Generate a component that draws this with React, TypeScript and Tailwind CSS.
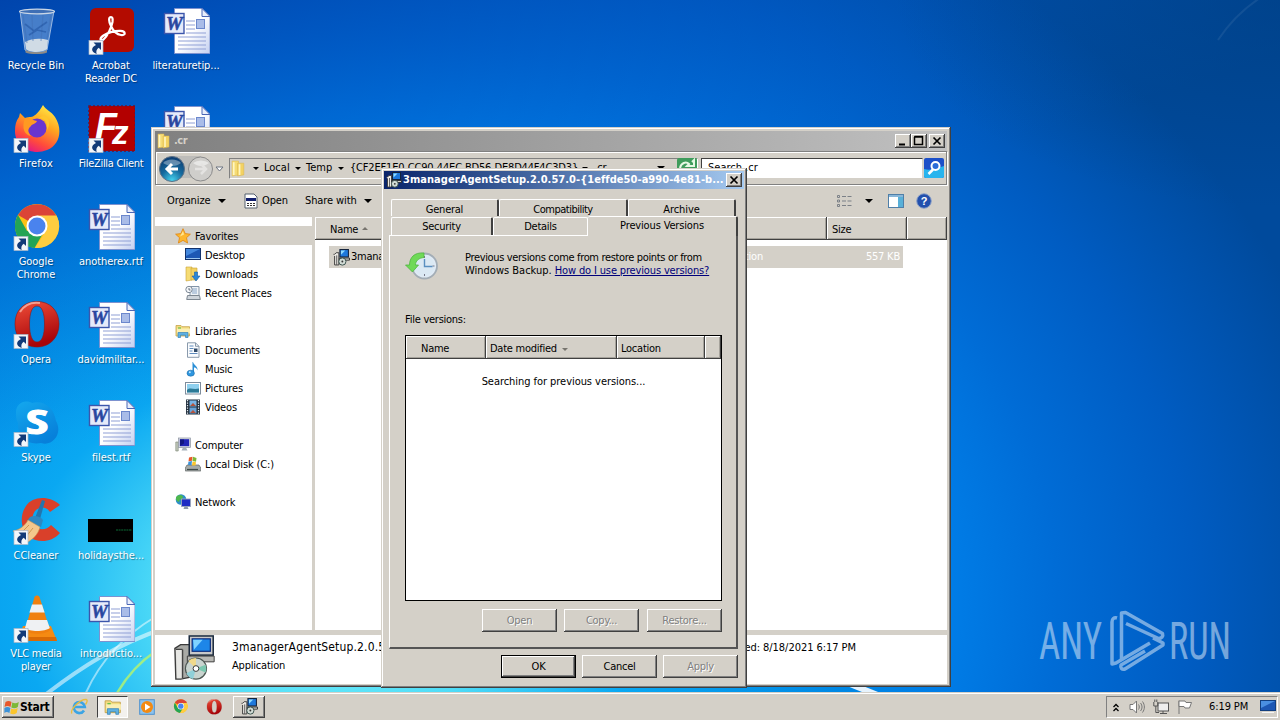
import React from "react";
import clsx from "clsx";

const RAISED =
  "bg-[#d4d0c8] shadow-[inset_-1px_-1px_0_#404040,inset_1px_1px_0_#fff,inset_-2px_-2px_0_#808080]";
const FRAME =
  "bg-[#d4d0c8] shadow-[inset_-1px_-1px_0_#404040,inset_1px_1px_0_#d4d0c8,inset_-2px_-2px_0_#808080,inset_2px_2px_0_#fff]";
const HEADER_CELL =
  "flex items-center bg-[#d4d0c8] pt-[3px] shadow-[inset_-1px_-1px_0_#404040,inset_1px_1px_0_#fff,inset_-2px_-2px_0_#a5a29b]";

/* ---------- desktop icons, all on a 48x48 grid ---------- */

const Shortcut = () => (
  <g>
    <rect x="2" y="33.5" width="14" height="14" fill="#f3f6fa" stroke="#a9b7c8" strokeWidth=".7" />
    <path d="M6.500 35.500H14V43l-2.300-2.300c-2.200 1.800-2.900 3.500-2 6.300C3.500 44.500 4 40.500 9 38z" fill="#123a78" />
  </g>
);

const RecycleBin = () => (
  <svg viewBox="0 0 48 48" className="size-12">
    <path d="M8 4l5 39c4 4 18 4 22 0l7-39z" fill="#7fa9dc" fillOpacity=".55" stroke="#b7cdea" strokeWidth=".8" />
    <path d="M13 35c7-4 16-4 23-2l-1 9c-4 4-18 4-21 0z" fill="#e9ebea" fillOpacity=".85" />
    <path d="M13.500 43c4 3 18 3 21.500 0v2.500c-4 2-17 2-21.500 0z" fill="#8c8a86" />
    <path d="M11 8l4 28M20 8l1 26M31 8l-2 26M39 8l-4 24" stroke="#3f6fb5" strokeWidth="1.200" fill="none" opacity=".5" />
    <path d="M13 17l9 7 13-9M17 28l8-5 9 2" stroke="#1c4e9c" strokeWidth="1.600" fill="none" opacity=".5" />
    <ellipse cx="25" cy="4.500" rx="17.500" ry="2.400" fill="#3f6fb5" stroke="#c9d6e6" strokeWidth="1.200" />
  </svg>
);

const Acrobat = () => (
  <svg viewBox="0 0 48 48" className="size-12">
    <rect x="3" y="1" width="44" height="44" rx="6" fill="#b30b00" />
    <path
      d="M24 10c-2.500 0-2.500 4 0 9 2 4.500 6 8.500 10 9 5 .6 5-4-.5-4.200-6-.2-13 2-17 4.700-4.500 3-3.500 6.500 0 4 4-3.500 8-12 9-17.500.5-3.500-.2-5-1.500-5z"
      fill="none"
      stroke="#fff"
      strokeWidth="2.200"
    />
    <Shortcut />
  </svg>
);

const WordDoc = () => (
  <svg viewBox="0 0 48 48" className="size-12">
    <defs>
      <linearGradient id="page" x1="0" y1="0" x2="1" y2="1">
        <stop offset=".5" stopColor="#fff" />
        <stop offset="1" stopColor="#c3cff0" />
      </linearGradient>
    </defs>
    <path d="M12.500 1.500H40l8 8V46.500H12.500z" fill="url(#page)" stroke="#7d92cf" />
    <path d="M40 1.500V9.500h8z" fill="#e8eefb" stroke="#4a66b5" />
    <path d="M24 14h9M24 18h9M24 22h9M24 26h20M16 30h28M16 34h28M16 38h28M16 42h28" stroke="#8f9fd6" strokeWidth="1.200" />
    <rect x="34.500" y="12.500" width="8" height="9" fill="#a9bce8" stroke="#6b87cc" />
    <rect x="2.500" y="6.500" width="19.500" height="20" fill="#e5eafa" stroke="#3c56ab" strokeWidth="1.400" />
    <text x="4" y="23" textLength="16.500" lengthAdjust="spacingAndGlyphs" fontSize="18" fontWeight="700" fontStyle="italic" fontFamily="Liberation Serif, serif" fill="#29469f" stroke="#29469f" strokeWidth=".5">
      W
    </text>
  </svg>
);

const Firefox = () => (
  <svg viewBox="0 0 48 48" className="size-12">
    <defs>
      <linearGradient id="fox" x1=".8" y1="0" x2=".3" y2="1">
        <stop offset="0" stopColor="#fff04a" />
        <stop offset=".4" stopColor="#ffa41f" />
        <stop offset=".75" stopColor="#ff4a3c" />
        <stop offset="1" stopColor="#e31587" />
      </linearGradient>
    </defs>
    <path d="M31 0c3 5 8 6 12 12 8 12 5 28-8 33-14 6-32-2-32-19 0-6 1-10 4-14l1-4 5 5c2-1 4-1 6-1 2 0 7-3 12-12z" fill="url(#fox)" />
    <circle cx="25" cy="23" r="9.500" fill="#6a35cf" />
    <path d="M13 13c5 0 6 2 12 3-1 3-5 3-6 5-4 3-3 7 0 10-6-1-10-7-6-18z" fill="#ff9a22" />
    <path d="M27 13c6 0 9 5 8 12 4-6 2-13-3-15z" fill="#ffc52c" />
    <Shortcut />
  </svg>
);

const FileZilla = () => (
  <svg viewBox="0 0 48 48" className="size-12">
    <rect x="2" y="1" width="46" height="45" fill="#b30000" />
    <rect x="2" y="1" width="46" height="45" fill="none" stroke="#6d1230" strokeWidth="1.500" strokeDasharray="2 2" />
    <text x="8" y="34" fontSize="36" fontWeight="700" fontStyle="italic" fontFamily="Liberation Sans, sans-serif" fill="#fff">
      F
      <tspan x="25" y="39" fontSize="33">
        z
      </tspan>
    </text>
    <Shortcut />
  </svg>
);

const ChromeMark = () => (
  <g>
    <circle cx="25" cy="23" r="22" fill="#fbc116" />
    <path d="M25 23L6 12a22 22 0 0 1 38.500 1z" fill="#db4437" />
    <path d="M6 12a22 22 0 0 0 16.500 33L33 27 15 28z" fill="#23a455" />
    <path d="M25 12.500h19.500A22 22 0 0 1 23 45l11-17z" fill="#ffcd40" />
    <circle cx="25" cy="23" r="10.500" fill="#fff" />
    <circle cx="25" cy="23" r="8.500" fill="#4a83ee" />
  </g>
);

const Chrome = () => (
  <svg viewBox="0 0 48 48" className="size-12">
    <ChromeMark />
    <Shortcut />
  </svg>
);

const OperaMark = () => (
  <g>
    <defs>
      <linearGradient id="opera" x1="0" y1="0" x2=".3" y2="1">
        <stop offset="0" stopColor="#f0503a" />
        <stop offset="1" stopColor="#a80409" />
      </linearGradient>
    </defs>
    <path
      fillRule="evenodd"
      d="M25 0.500c13 0 22 9 22 22.500S38 46 25 46 3 37 3 23 12 .5 25 .5zM25 5c-5 0-7.500 7-7.500 18S20 41 25 41s7.500-7 7.500-18S30 5 25 5z"
      fill="url(#opera)"
      stroke="#8d1414"
      strokeWidth=".6"
    />
    <path d="M8 11c5-8 13-10 20-9" stroke="#f9b6a8" strokeWidth="2" fill="none" opacity=".8" />
  </g>
);

const Opera = () => (
  <svg viewBox="0 0 48 48" className="size-12">
    <OperaMark />
    <Shortcut />
  </svg>
);

const Skype = () => (
  <svg viewBox="0 0 48 48" className="size-12">
    <defs>
      <linearGradient id="skype" x1="0" y1="0" x2=".6" y2="1">
        <stop offset="0" stopColor="#14a8ee" />
        <stop offset="1" stopColor="#0780da" />
      </linearGradient>
    </defs>
    <path d="M4 13C4 5 12 0 20 4c12-3 22 5 24 18 7 12-3 26-15 22C14 47 5 36 6 24c-2-3-2-7-2-11z" fill="url(#skype)" />
    <text x="14" y="35" textLength="22" lengthAdjust="spacingAndGlyphs" fontSize="34" fontWeight="700" fontFamily="Open Sans, sans-serif" fill="#fff" stroke="#fff">
      S
    </text>
    <Shortcut />
  </svg>
);

const CCleaner = () => (
  <svg viewBox="0 0 48 48" className="size-12">
    <path d="M48 8C38-2 20-1 14 9c-7 10-5 24 3 31 9 6 22 6 31-4l-9-8c-4 5-12 6-16 1-4-5-3-12 1-16 5-4 11-3 14 2z" fill="#d9402a" />
    <path d="M30 3l3 1-5 18-5-1z" fill="#2375ad" />
    <path d="M18 20c4-2 10-1 13 3l-2 7-14-6z" fill="#2d88c2" />
    <path d="M16 23l12 7c-2 8-8 13-14 16L1 34c6-1 12-5 15-11z" fill="#f3c78c" stroke="#c8924f" strokeWidth=".6" />
    <path d="M17 28L7 38M21 31l-8 10" stroke="#cf9853" strokeWidth="1" />
    <Shortcut />
  </svg>
);

const Vlc = () => (
  <svg viewBox="0 0 48 48" className="size-12">
    <path d="M11 31h28l6 15H5z" fill="#f58a12" />
    <path d="M5 46h40l-1-4H7z" fill="#d86a05" />
    <path d="M22.500 2c1-2 4-2 5 0l10.500 33c-4 5-21 5-25 0z" fill="#f0800f" />
    <path d="M20 9.500h10l2.600 8H17.400z" fill="#eff1f3" />
    <path d="M15.200 25h19.800l2.800 8c-5 4-20.500 4-24.800 0z" fill="#eff1f3" />
    <Shortcut />
  </svg>
);

const BlackThumb = () => (
  <svg viewBox="0 0 48 48" className="size-12">
    <rect x="1" y="22" width="45" height="23" fill="#000" />
    <path d="M29 33h16" stroke="#0c6a35" strokeDasharray="2 .6" />
  </svg>
);

const desktop = [
  { label: ["Recycle Bin"], icon: RecycleBin },
  { label: ["Firefox"], icon: Firefox, spacing: "tracking-[0.2px]" },
  { label: ["Google", "Chrome"], icon: Chrome },
  { label: ["Opera"], icon: Opera },
  { label: ["Skype"], icon: Skype },
  { label: ["CCleaner"], icon: CCleaner },
  { label: ["VLC media", "player"], icon: Vlc, spacing: "tracking-[-0.2px]" },
  { label: ["Acrobat", "Reader DC"], icon: Acrobat },
  { label: ["FileZilla Client"], icon: FileZilla, spacing: "tracking-[-0.3px]" },
  { label: ["anotherex.rtf"], icon: WordDoc },
  { label: ["davidmilitar..."], icon: WordDoc },
  { label: ["filest.rtf"], icon: WordDoc },
  { label: ["holidaysthe..."], icon: BlackThumb },
  { label: ["introductio..."], icon: WordDoc },
  { label: ["literaturetip..."], icon: WordDoc },
  { label: [], icon: WordDoc },
];

/* ---------- small 16px icons ---------- */

const Folder = ({ className = "size-4" }: { className?: string }) => (
  <svg viewBox="0 0 16 16" className={className}>
    <path d="M2 1h6v13l-6 1z" fill="#f6dc74" stroke="#d9b650" strokeWidth=".5" />
    <path d="M7 3h6v11l-6 1z" fill="#f3d262" stroke="#d9b650" strokeWidth=".5" />
    <path d="M3.500 2v12M9 4v10" stroke="#fff6c2" strokeWidth="1.600" />
  </svg>
);

const Setup = ({ className = "size-4" }: { className?: string }) => (
  <svg viewBox="0 0 48 48" className={className}>
    <path d="M3 14l6-4h10v34l-10 2H4z" fill="#a9aaa6" stroke="#3b3b3b" strokeWidth="1.400" />
    <path d="M4 15h7v30H5z" fill="#e7e7e4" />
    <path d="M4 15h7M11 15v30" stroke="#444" strokeWidth="1.500" />
    <rect x="18" y="1" width="25" height="20" fill="#c9c9c9" stroke="#1b2a3d" strokeWidth="1.600" />
    <rect x="21" y="4" width="19" height="13" fill="#1d86e8" stroke="#0b2a7a" strokeWidth="1.200" />
    <path d="M22 5h10l-9 10z" fill="#7fd3ff" />
    <path d="M16 22h28v6H16z" fill="#b8b8b4" stroke="#3b3b3b" />
    <circle cx="25" cy="35" r="11" fill="#c9d4cf" stroke="#4c5652" strokeWidth="1.200" />
    <path d="M25 35L17 27a11 11 0 0 1 8-3z" fill="#f0d98a" />
    <path d="M25 35l10-4a11 11 0 0 1 0 8z" fill="#7cc8b0" />
    <path d="M25 35l-3 11a11 11 0 0 1-7-6z" fill="#90d0d8" />
    <circle cx="25" cy="35" r="3" fill="#fff" stroke="#333" />
  </svg>
);

// simplified version of Setup that stays readable at list size
const SetupSmall = ({ className = "size-4" }: { className?: string }) => (
  <svg viewBox="0 0 16 16" className={className}>
    <path d="M.5 5h1l1.500-1.500h2.500V15H1.500V6.500" fill="#ece9e4" stroke="#3c3c3c" strokeWidth=".9" />
    <path d="M3.500 6v9" stroke="#555" strokeWidth=".9" />
    <rect x="6.500" y=".5" width="8" height="7" fill="#1d78dc" stroke="#14233c" />
    <path d="M7.500 1.500h4l-4 4z" fill="#8fdcff" />
    <path d="M6 8.500h9.500v2H6z" fill="#d5d3ce" stroke="#222" strokeWidth=".8" />
    <circle cx="8.800" cy="11.800" r="3.400" fill="#d2dcd6" stroke="#39504c" strokeWidth=".9" />
    <circle cx="8.800" cy="11.800" r=".9" fill="#333" />
  </svg>
);

const Star = () => (
  <svg viewBox="0 0 16 16" className="size-4">
    <path d="M8 .7l2.200 4.900 5.200.6-3.900 3.500 1.100 5.300L8 12.400 3.400 15l1.100-5.300L.6 6.200l5.200-.6z" fill="#fdb72e" stroke="#df8410" strokeWidth=".8" />
    <path d="M8 3l1 3.500-4 2z" fill="#ffe590" />
  </svg>
);

const DesktopIcon = () => (
  <svg viewBox="0 0 16 16" className="size-4">
    <rect x=".5" y="1.500" width="15" height="11" fill="#1d57b4" stroke="#12326c" />
    <path d="M1 2h14L1 9z" fill="#4387dd" />
    <path d="M1 11.500h14" stroke="#9cc6f0" />
  </svg>
);

const Downloads = () => (
  <svg viewBox="0 0 16 16" className="size-4">
    <path d="M1 1h6v13l-6 1z" fill="#f6dc74" stroke="#c9a136" strokeWidth=".6" />
    <path d="M6 2h6v12H6z" fill="#f3d262" stroke="#caa238" strokeWidth=".6" />
    <path d="M9.500 6h3v4h2.500l-4 5-4-5h2.500z" fill="#2a86d8" stroke="#1560a8" strokeWidth=".6" />
  </svg>
);

const Recent = () => (
  <svg viewBox="0 0 16 16" className="size-4">
    <path d="M5 1.500h9v9H5z" fill="#eef2f6" stroke="#8294a8" />
    <path d="M7 4h5M7 6h5M7 8h5" stroke="#88a5c7" />
    <circle cx="4" cy="4.500" r="3.200" fill="#f5f7fa" stroke="#7e8a97" />
    <path d="M4 3v2h1.500" stroke="#456" fill="none" strokeWidth=".8" />
    <path d="M2.500 10.500h12l.8 4H1.700z" fill="#cfd5db" stroke="#7d8791" />
  </svg>
);

const Library = ({ className = "size-4" }: { className?: string }) => (
  <svg viewBox="0 0 16 16" className={className}>
    <path d="M1 2.500h5l1 1.200h7.500V13H1z" fill="#f4dc80" stroke="#c5a24a" strokeWidth=".8" />
    <path d="M2 5.500h13v5H2z" fill="#fbefb4" />
    <path d="M3 14.500V9.500h10v5h-2.500v-2.300h-5v2.300z" fill="#5fb1e2" stroke="#3784b8" strokeWidth=".7" />
    <path d="M3 5h3" stroke="#6cc04a" strokeWidth="1.200" />
  </svg>
);

const Documents = () => (
  <svg viewBox="0 0 16 16" className="size-4">
    <path d="M2.500.8h8l3.500 3.500v11H2.500z" fill="#fafcfe" stroke="#7d8ea3" strokeWidth=".9" />
    <path d="M10.500.8v3.500H14" fill="none" stroke="#7d8ea3" strokeWidth=".9" />
    <path d="M4.500 4h4M4.500 6.500h4M4.500 9h3M4.500 11.500h8" stroke="#4e7fb5" strokeWidth=".9" />
    <rect x="9" y="6.500" width="3.500" height="3.500" fill="#304a68" />
  </svg>
);

const Music = () => (
  <svg viewBox="0 0 16 16" className="size-4">
    <path d="M8 1c1 3.500 5 4 4.500 8.500C12 7 10 6.500 9 6.500v6H7.500V1z" fill="#2b8fd6" />
    <ellipse cx="5.700" cy="12.200" rx="3.700" ry="3" fill="#2f97e0" stroke="#1c6ca8" strokeWidth=".6" />
    <circle cx="4.800" cy="11.300" r="1" fill="#bfe6ff" />
  </svg>
);

const Pictures = () => (
  <svg viewBox="0 0 16 16" className="size-4">
    <rect x=".5" y="2.500" width="15" height="11.500" fill="#fff" stroke="#7d8c9c" />
    <rect x="2" y="4" width="12" height="8.500" fill="#8fd0ee" />
    <path d="M2 10c3-3 6 0 12-1.500v4H2z" fill="#2d7a96" />
  </svg>
);

const Videos = () => (
  <svg viewBox="0 0 16 16" className="size-4">
    <rect x="1" y=".5" width="14" height="15" fill="#23303e" />
    <path d="M2.500 1v14M13.500 1v14" stroke="#e7edf3" strokeWidth="1.200" strokeDasharray="1.300 1.200" />
    <rect x="4.500" y="1.500" width="7" height="6" fill="#79b4e4" />
    <rect x="4.500" y="8.500" width="7" height="6" fill="#6ba3d6" />
    <path d="M5 7l3-3 3 3zM5 14l3-3 3 3z" fill="#b4533c" />
  </svg>
);

const Computer = () => (
  <svg viewBox="0 0 16 16" className="size-4">
    <path d="M.8 5h2.400v9H.8z" fill="#c3cbbd" stroke="#76806e" strokeWidth=".6" />
    <rect x="3.500" y="1" width="12" height="9.500" fill="#dcdfe4" stroke="#8a93a0" strokeWidth=".7" />
    <rect x="4.800" y="2.200" width="9.400" height="7" fill="#2023b4" />
    <path d="M5 2.500h4v4L5 9z" fill="#111680" />
    <path d="M8 10.500h3l1.500 3h-6z" fill="#a6afba" />
  </svg>
);

const Disk = () => (
  <svg viewBox="0 0 16 16" className="size-4">
    <path d="M2 9h12l1.800 3v3H.3v-3z" fill="#a4aaa8" stroke="#5e6664" strokeWidth=".7" />
    <path d="M2 13.500h11" stroke="#3f4a48" strokeWidth="1.200" />
    <path d="M4 1.500l3.500-.8-.5 4-3.500.6z" fill="#e8572b" />
    <path d="M8 .8L11.500 2 11 5.800 7.500 5z" fill="#7db838" />
    <path d="M3.400 5.800L7 5l-.5 4H3z" fill="#3c92d8" />
    <path d="M7.500 5.500l3.500.8-.5 3.200H7z" fill="#fbc52c" />
  </svg>
);

const Network = () => (
  <svg viewBox="0 0 16 16" className="size-4">
    <circle cx="6" cy="5.500" r="5.300" fill="#2c8fc9" />
    <path d="M2 2c3-2 6-1 6 1S4 5 4 8C1 7 0 4 2 2z" fill="#4fb84c" />
    <rect x="6.500" y="5" width="9" height="7.500" fill="#1e2bc4" stroke="#9aa6bd" strokeWidth=".9" />
    <path d="M9.500 12.500h3l1 2.500h-5z" fill="#8c98ab" />
  </svg>
);

const Arrow = () => (
  <svg viewBox="0 0 8 4" className="h-1 w-2 shrink-0">
    <path d="M0 0h8L4 4z" />
  </svg>
);

const MiniArrow = () => (
  <svg viewBox="0 0 6 3" className="h-[3px] w-1.5 shrink-0">
    <path d="M0 0h6L3 3z" />
  </svg>
);

/* ---------- explorer window ---------- */

const CaptionButton = ({ children }: { children: React.ReactNode }) => (
  <button className={clsx("flex h-[14px] w-4 items-center justify-center", RAISED)}>
    <svg viewBox="0 0 16 14" className="h-[14px] w-4" fill="none" stroke="#000">
      {children}
    </svg>
  </button>
);

const navItems = [
  { label: "Favorites", icon: Star, root: true },
  { label: "Desktop", icon: DesktopIcon },
  { label: "Downloads", icon: Downloads },
  { label: "Recent Places", icon: Recent },
  null,
  { label: "Libraries", icon: Library, root: true },
  { label: "Documents", icon: Documents },
  { label: "Music", icon: Music },
  { label: "Pictures", icon: Pictures },
  { label: "Videos", icon: Videos },
  null,
  { label: "Computer", icon: Computer, root: true },
  { label: "Local Disk (C:)", icon: Disk },
  null,
  { label: "Network", icon: Network, root: true },
];

const AddressBar = () => (
  <div className="flex h-[34px] shrink-0 items-center border border-[#808080] tracking-normal shadow-[inset_1px_1px_0_#fff,1px_1px_0_#fff]">
    <svg viewBox="0 0 68 30" className="ml-[3px] h-[30px] w-[68px] shrink-0">
      <defs>
        <radialGradient id="back" cx=".5" cy=".95" r=".9">
          <stop offset="0" stopColor="#45d2ee" />
          <stop offset=".5" stopColor="#156a9e" />
          <stop offset="1" stopColor="#0d3f74" />
        </radialGradient>
      </defs>
      <path d="M14 3h28v22H14z" fill="#bdbcb9" />
      <circle cx="13" cy="16" r="12.500" fill="url(#back)" stroke="#5d7186" />
      <path d="M4 10a11 8 0 0 1 18 0c-5 4-12 4-18 0z" fill="#fff" opacity=".35" />
      <path d="M19 16H8m5-5l-5 5 5 5" stroke="#fff" strokeWidth="3" fill="none" />
      <circle cx="41.500" cy="16" r="12" fill="#cfcecb" stroke="#8b8b8b" />
      <path d="M34 10a11 8 0 0 1 16 0c-5 4-11 4-16 0z" fill="#fff" opacity=".5" />
      <path d="M36 16h11m-5-5l5 5-5 5" stroke="#e4e3e1" strokeWidth="2.500" fill="none" />
      <path d="M57 14h7l-3.500 4z" fill="#fff" stroke="#6d7480" />
    </svg>
    <div className="ml-[2px] flex h-[21px] w-[469px] shrink-0 items-center border border-[#808080] border-r-white border-b-white">
      <Folder className="size-[17px]" />
      <div className="ml-[6px] flex items-center gap-1.5">
        <MiniArrow />
        <span className="-ml-px w-6">Local</span>
        <span className="ml-px flex">
          <MiniArrow />
        </span>
        <span className="-ml-px w-[26px]">Temp</span>
        <MiniArrow />
        <span className="w-[226px] tracking-[-0.18px] whitespace-nowrap">{"{CF2EF1E0-CC90-44EC-BD56-DE8D44F4C3D3}"}</span>
        <MiniArrow />
        <span>.cr</span>
      </div>
      <span className="mr-3 ml-auto">
        <Arrow />
      </span>
      <svg viewBox="0 0 20 20" className="size-5 shrink-0">
        <rect width="20" height="20" rx="2" fill="#3f9c5c" />
        <path d="M3 10c1-5 6-7 9-4l-2 2h7V2l-2 2" fill="none" stroke="#e6f8e4" strokeWidth="2" />
      </svg>
    </div>
    <div className="ml-[3px] flex h-[21px] w-[222px] shrink-0 items-center border border-[#404040] border-r-[#d4d0c8] border-b-[#d4d0c8] bg-white pl-1.5">
      Search .cr
    </div>
    <svg viewBox="0 0 20 20" className="ml-px size-5 shrink-0">
      <rect width="20" height="20" rx="2" fill="#1c4fc8" />
      <path d="M0 11c7 2 13-1 20-3v10a2 2 0 0 1-2 2H2a2 2 0 0 1-2-2z" fill="#27b4ee" />
      <path d="M9 11.500L4.500 16" stroke="#fff" strokeWidth="2.500" />
      <circle cx="11.500" cy="8" r="4" fill="#2b6cd8" stroke="#fff" strokeWidth="2" />
    </svg>
  </div>
);

const Toolbar = () => (
  <div className="flex h-8 shrink-0 items-center pl-3 tracking-[-0.1px]">
    <span className="w-[44px]">Organize</span>
    <span className="ml-[7px]">
      <Arrow />
    </span>
    <svg viewBox="0 0 14 16" className="ml-[18px] h-4 w-[14px]">
      <path d="M1 1h9l3 3v11H1z" fill="#fff" stroke="#55606e" />
      <rect x="2" y="5" width="10" height="3" fill="#101e6e" />
      <path d="M3 10.500h2M6 10.500h2M9 10.500h2M3 12.500h2M6 12.500h2M9 12.500h2" stroke="#333" />
    </svg>
    <span className="ml-1 w-[28px]">Open</span>
    <span className="ml-[15px] w-[54px] whitespace-nowrap">Share with</span>
    <span className="ml-[5px]">
      <Arrow />
    </span>
    <svg viewBox="0 0 16 14" className="mr-[13px] ml-auto h-[14px] w-4" fill="none" stroke="#7b8087">
      <path d="M1.500 1.500h2v2h-2zM1.500 6h2v2h-2zM1.500 10.500h2v2h-2z" />
      <path d="M6 2.500h4M11.500 2.500h4M6 7h4M11.500 7h4M6 11.500h4M11.500 11.500h4" />
    </svg>
    <Arrow />
    <svg viewBox="0 0 16 14" className="ml-[15px] h-[14px] w-4">
      <rect x=".5" y=".5" width="15" height="13" fill="#fff" stroke="#4f7fa8" />
      <path d="M1 2h14" stroke="#89b6d8" strokeWidth="2" />
      <rect x="10" y="3" width="5" height="10" fill="#58b0d8" />
    </svg>
    <svg viewBox="0 0 16 16" className="mr-[15px] ml-3 size-4">
      <circle cx="8" cy="8" r="7.300" fill="#2350ad" stroke="#8fa3c8" />
      <text x="8" y="12" textAnchor="middle" fontSize="11" fontWeight="700" fontFamily="Liberation Sans, sans-serif" fill="#fff">
        ?
      </text>
    </svg>
  </div>
);

const Explorer = () => (
  <div className={clsx("absolute top-[127px] left-[151px] flex h-[560px] w-[800px] flex-col p-1 pb-[3px]", FRAME)}>
    <div className="flex h-5 shrink-0 items-center bg-linear-to-r from-[#808080] to-[#c0c0c0] pr-[2px] pl-px text-[#d4d0c8]">
      <Folder />
      <span className="ml-[2px] font-bold tracking-[-0.5px]">.cr</span>
      <div className="ml-auto flex">
        <CaptionButton>
          <path d="M4 10.500h6" strokeWidth="2" />
        </CaptionButton>
        <CaptionButton>
          <path d="M3.500 3v7.500h8V2.500h-8M3 3h9" strokeWidth="1.500" />
        </CaptionButton>
        <span className="w-[2px]" />
        <CaptionButton>
          <path d="M4.500 3.500l7 7M11.500 3.500l-7 7" strokeWidth="1.700" />
        </CaptionButton>
      </div>
    </div>
    <AddressBar />
    <Toolbar />
    <div className="flex min-h-0 flex-1 bg-[#d4d0c8]">
      <div className="w-[157px] bg-white pt-[9px] tracking-[-0.15px]">
        {navItems.map((item, i) =>
          item ? (
            <div
              key={item.label}
              className={clsx(
                "flex h-[19px] items-center gap-1",
                item.root ? "pl-5" : "pl-[30px]",
                i === 0 && "bg-[#d4d0c8]"
              )}
            >
              <item.icon />
              <span className="pt-[3px]">{item.label}</span>
            </div>
          ) : (
            <div key={i} className="h-[19px]" />
          )
        )}
      </div>
      <div className="ml-[3px] flex-1 bg-white">
        <div className="flex h-[23px]">
          <div className={clsx("w-[300px] gap-1 pl-[15px]", HEADER_CELL)}>
            Name
            <svg viewBox="0 0 6 3" className="mb-1 h-[3px] w-1.5">
              <path d="M0 3h6L3 0z" fill="#77746e" />
            </svg>
          </div>
          <div className={clsx("w-[212px]", HEADER_CELL)} />
          <div className={clsx("w-20 pl-[5px]", HEADER_CELL)}>Size</div>
          <div className={clsx("flex-1", HEADER_CELL)} />
        </div>
        <div className="mt-[6px] ml-[14px] flex h-[22px] w-[574px] items-center bg-[#d4d0c8] pr-[3px] pl-1">
          <SetupSmall className="size-[17px]" />
          <span className="ml-px w-[330px] pt-px">3managerAgentSetup.2.0.57.0</span>
          <span className="flex-1 pt-px pl-[28px] tracking-[-0.1px] text-white">Application</span>
          <span className="pt-px tracking-[-0.2px] text-white">557 KB</span>
        </div>
      </div>
    </div>
    <div className="mt-[5px] flex h-[49px] shrink-0 bg-white">
      <Setup className="ml-[17px] size-[46px]" />
      <div className="ml-[14px] flex w-[430px] flex-col pt-[3px] leading-[18px]">
        <span className="text-[12px] tracking-[0.15px]">3managerAgentSetup.2.0.57.0</span>
        <span className="pt-px tracking-[-0.2px]">Application</span>
      </div>
      <span className="w-[194px] pt-1 text-right leading-[17px] tracking-[-0.05px] whitespace-nowrap">
        Date modified: 8/18/2021 6:17 PM
      </span>
    </div>
  </div>
);

/* ---------- properties dialog ---------- */

interface TabProps {
  label: string;
  className: string;
}

const Tab = ({ label, className }: TabProps) => (
  <div
    className={clsx(
      "flex justify-center rounded-t-[2px] border-t border-l border-t-white border-l-white border-r-[#404040]",
      className
    )}
  >
    {label}
  </div>
);

interface DialogButtonProps {
  label: string;
  disabled?: boolean;
  primary?: boolean;
}

const DialogButton = ({ label, disabled, primary }: DialogButtonProps) => (
  <button
    disabled={disabled}
    className={clsx(
      "h-[23px] w-[75px] pt-px",
      RAISED,
      primary && "border border-black",
      disabled && "text-[#808080] [text-shadow:1px_1px_0_#fff]"
    )}
  >
    {label}
  </button>
);

const Dialog = () => (
  <div className={clsx("absolute top-[168px] left-[381px] flex h-[520px] w-[366px] flex-col p-[3px]", FRAME)}>
    <div className="flex h-[18px] shrink-0 items-center bg-linear-to-r from-[#0a246a] to-[#a6caf0] pr-[2px] pl-[2px] text-white">
      <SetupSmall />
      <span className="ml-px w-[322px] pt-px font-bold tracking-[0.05px] whitespace-nowrap">
        3managerAgentSetup.2.0.57.0-{"{"}1effde50-a990-4e81-b...
      </span>
      <span className="ml-auto flex">
        <CaptionButton>
          <path d="M4.500 3.500l7 7M11.500 3.500l-7 7" strokeWidth="1.700" />
        </CaptionButton>
      </span>
    </div>
    <div className="mx-[5px] mt-[10px] flex flex-1 flex-col">
      <div className="ml-[2px] flex h-[17px] shrink-0">
        <Tab label="General" className="w-[108px] border-r-2 pt-[2px]" />
        <Tab label="Compatibility" className="w-[129px] border-r-2 pt-[2px] tracking-[-0.5px]" />
        <Tab label="Archive" className="w-[108px] border-r-2 pt-[2px] tracking-[-0.1px]" />
      </div>
      <div className="flex h-5 shrink-0">
        <div className="flex w-[199px] border-b border-white pt-px pl-[2px]">
          <Tab label="Security" className="w-[102px] border-r-2 pt-px" />
          <Tab label="Details" className="w-[95px] border-r border-r-white pt-px" />
        </div>
        <Tab label="Previous Versions" className="w-[150px] border-l-0 border-r-2 pt-px tracking-[-0.15px]" />
      </div>
      <div className="flex h-[413px] w-[349px] shrink-0 flex-col border-r-2 border-b-2 border-l border-r-[#555] border-b-[#555] border-l-white pl-[15px]">
        <div className="flex h-[77px] pt-[15px]">
          <svg viewBox="0 0 34 30" className="h-[30px] w-[34px]">
            <circle cx="19.500" cy="15" r="12.500" fill="#dfeaf5" stroke="#a3adb6" strokeWidth="1.800" />
            <circle cx="19.500" cy="15" r="10" fill="#dbe9f4" />
            <path d="M19.500 5v2M19.500 23v2M9.500 15h2M27.500 15h2" stroke="#778" />
            <path d="M19.500 8v7.500h8" stroke="#5a8fc0" strokeWidth="1.400" fill="none" />
            <path d="M19 2C9 1 4.500 7 4.500 14H.5L7.500 21l6-7h-3c0-4 3-7 8.500-7.500z" fill="#6fd957" stroke="#4fb540" strokeWidth=".8" />
          </svg>
          <div className="ml-[26px] leading-[13px] whitespace-nowrap">
            <span className="tracking-[-0.34px]">Previous versions come from restore points or from</span>
            <br />
            <span className="tracking-normal">Windows Backup. </span>
            <a className="tracking-[-0.15px] text-[#00007a] underline">How do I use previous versions?</a>
          </div>
        </div>
        <span className="h-[22px] leading-[14px]">File versions:</span>
        <div className="h-[266px] w-[317px] border border-black bg-white">
          <div className="flex h-[23px]">
            <div className={clsx("w-20 pl-[15px]", HEADER_CELL)}>Name</div>
            <div className={clsx("w-[131px] gap-[5px] pl-1", HEADER_CELL)}>
              Date modified
              <svg viewBox="0 0 6 3" className="h-[3px] w-1.5">
                <path d="M0 0h6L3 3z" fill="#77746e" />
              </svg>
            </div>
            <div className={clsx("w-[88px] pl-1", HEADER_CELL)}>Location</div>
            <div className={clsx("flex-1", HEADER_CELL)} />
          </div>
          <p className="mt-[15px] text-center tracking-[-0.05px]">Searching for previous versions...</p>
        </div>
        <div className="mt-2 flex w-[317px] justify-end gap-2">
          <div className="-mr-px">
            <DialogButton label="Open" disabled />
          </div>
          <DialogButton label="Copy..." disabled />
          <DialogButton label="Restore..." disabled />
        </div>
      </div>
      <div className="mt-1.5 mr-px flex justify-end gap-1.5">
        <DialogButton label="OK" primary />
        <DialogButton label="Cancel" />
        <DialogButton label="Apply" disabled />
      </div>
    </div>
  </div>
);

/* ---------- taskbar ---------- */

const Taskbar = () => (
  <div className="flex h-7 items-center border-t border-[#d4d0c8] bg-[#d4d0c8] pl-[2px] shadow-[inset_0_1px_0_#fff]">
    <button className={clsx("flex h-[22px] w-[52px] items-center pl-[2px]", RAISED)}>
      <svg viewBox="0 0 16 16" className="size-4">
        <path d="M1.500 3c2-1.500 4-1.500 6 0l-1 5c-2-1.300-4-1.300-6 0z" fill="#e8572b" />
        <path d="M8.300 3.500c2 1 4 1 6.500-.5l-1 5c-2 1.500-4.500 1.500-6.500.5z" fill="#7db838" />
        <path d="M.4 9c2-1.500 4-1.500 6 0l-1 5c-2-1.300-3.500-1.300-5 0z" fill="#3c92d8" />
        <path d="M7.200 9.500c2 1 4 1 6.500-.5l-1 5c-2 1.500-4.500 1.500-6.500.5z" fill="#fbc52c" />
      </svg>
      <span className="text-[12px] font-bold">Start</span>
    </button>
    <svg viewBox="0 0 18 18" className="mt-px ml-[16px] size-[18px]">
      <path d="M14 12.500a5.500 5.500 0 1 1 .8-3.500H4.500" fill="none" stroke="#3ba4e4" strokeWidth="2.600" />
      <path d="M2 15.500C-.5 12 10 1 16 1.500c2 .3 1 3-.5 5" fill="none" stroke="#e8bd3f" strokeWidth="1.300" />
    </svg>
    <div className="mt-px ml-[9px] flex h-[22px] w-[31px] items-center justify-center border border-[#404040] border-r-white border-b-white bg-[#f3f1ee]">
      <Library className="size-[18px]" />
    </div>
    <svg viewBox="0 0 16 16" className="ml-[11px] size-4">
      <rect x=".7" y=".7" width="14.600" height="14.600" fill="#8dc3ee" stroke="#4e92cf" />
      <circle cx="8" cy="8" r="6" fill="#f28a13" />
      <path d="M6 4.500l5.500 3.500L6 11.500z" fill="#fff" />
    </svg>
    <svg viewBox="0 0 48 48" className="ml-[18px] size-[15px]">
      <ChromeMark />
    </svg>
    <svg viewBox="0 0 48 48" className="ml-[18px] size-[16px]">
      <OperaMark />
    </svg>
    <div className={clsx("ml-[11px] flex h-[22px] w-8 items-center justify-center", RAISED)}>
      <SetupSmall className="size-[17px]" />
    </div>
    <div className="mt-px mr-[2px] ml-auto flex h-[22px] w-[172px] items-center border border-[#808080] border-r-white border-b-white pl-[6px]">
      <svg viewBox="0 0 6 9" className="h-[9px] w-1.5" fill="none" stroke="#000" strokeWidth="1.300">
        <path d="M.5 4L3 1.500 5.500 4M.5 8L3 5.500 5.500 8" />
      </svg>
      <svg viewBox="0 0 16 16" className="ml-2.5 size-4" fill="#fff" stroke="#777">
        <path d="M1 5.500h3L7.500 2v12L4 10.500H1z" />
        <path d="M9.500 5.500c1 1.500 1 3.500 0 5M11.500 4c2 2.500 2 5.500 0 8M13.500 2.500c2.500 3.500 2.500 7.500 0 11" fill="none" />
      </svg>
      <svg viewBox="0 0 16 16" className="ml-2 size-4" fill="#eee" stroke="#555">
        <rect x="5" y="4" width="10.500" height="8" />
        <path d="M7 14.500h7M10 12v2" />
        <path d="M.8 3v4h4V3M1.800 3V.5M3.800 3V.5M2.800 7v6.500H6" fill="none" />
      </svg>
      <svg viewBox="0 0 16 16" className="ml-2 size-4" fill="#fff" stroke="#777">
        <path d="M2 15V1.500" />
        <path d="M2 2h6l1 1.500h5.500L12.500 9H8L7 7.500H2z" />
      </svg>
      <span className="ml-4 w-[40px] tracking-[-0.1px] whitespace-nowrap">6:19 PM</span>
      <svg viewBox="0 0 16 14" className="ml-[11px] h-[14px] w-4">
        <rect x=".5" y=".5" width="15" height="10" fill="#1d57b4" stroke="#123f80" />
        <path d="M1 1h14L1 8z" fill="#4a8fe2" />
        <path d="M2 12.500h12" stroke="#f5f5f5" />
      </svg>
    </div>
  </div>
);

const Wallpaper = () => (
  <svg viewBox="0 0 1280 692" className="absolute inset-0 h-[692px] w-[1280px]" preserveAspectRatio="none">
    <defs>
      <radialGradient id="sky" gradientUnits="userSpaceOnUse" cx="330" cy="600" r="1040" gradientTransform="translate(330 600) scale(1 .78) translate(-330 -600)">
        <stop offset="0" stopColor="#7df4fb" />
        <stop offset=".16" stopColor="#50dcf7" />
        <stop offset=".3" stopColor="#0aa8f2" />
        <stop offset=".5" stopColor="#0088e4" />
        <stop offset=".6" stopColor="#007ce6" />
        <stop offset=".7" stopColor="#006cd6" />
        <stop offset=".83" stopColor="#005cc2" />
        <stop offset="1" stopColor="#004a9c" />
      </radialGradient>
      <linearGradient id="corner" x1="0" y1="0" x2=".3" y2=".5">
        <stop offset="0" stopColor="#0040a8" stopOpacity=".85" />
        <stop offset="1" stopColor="#0060d0" stopOpacity="0" />
      </linearGradient>
      <radialGradient id="dark" cx="1" cy="0" r=".3">
        <stop offset="0" stopColor="#003a78" stopOpacity=".5" />
        <stop offset="1" stopColor="#003a78" stopOpacity="0" />
      </radialGradient>
    </defs>
    <rect width="1280" height="692" fill="url(#sky)" />
    <rect width="1280" height="692" fill="url(#corner)" />
    <rect width="1280" height="692" fill="url(#dark)" />
    <g fill="none" stroke="#fff">
      <path d="M45 695C80 668 115 645 165 628" strokeWidth="4" opacity=".55" />
      <path d="M85 695c15-35 40-60 70-78" strokeWidth="2" opacity=".5" />
      <path d="M116 695c10-18 22-32 40-44" stroke="#b6f56b" strokeWidth="2.500" opacity=".8" />
      <path d="M850 684l30 12" strokeWidth="6" opacity=".9" />
      <path d="M1218 40c12-18 25-31 42-42" strokeWidth="2" opacity=".07" />
    </g>
  </svg>
);

const AnyRun = () => (
  <svg viewBox="0 0 200 70" className="absolute top-[606px] left-[1035px] h-[70px] w-[200px] overflow-visible opacity-55">
    <g fill="#d5e6f7" fontFamily="Roboto, sans-serif" fontSize="51" fontWeight="400" letterSpacing="0">
      <text x="4" y="53" textLength="63" lengthAdjust="spacingAndGlyphs">
        ANY
      </text>
      <text x="134" y="53" textLength="62" lengthAdjust="spacingAndGlyphs">
        RUN
      </text>
    </g>
    <g fill="none" stroke="#d5e6f7" strokeWidth="3.500" strokeLinejoin="round">
      <path d="M82 12c-3-1-5 1-5 4v42l4-1 34-20" />
      <path d="M86.500 53V7l4-.5 37 21c1 3-1 5-4 5L91 17.500" />
      <path d="M118 32l10 5v2L90 63c-3 1-5-1-4-4l24-14" />
    </g>
  </svg>
);

const App = () => {
  return (
    <div className="relative flex h-[720px] w-[1280px] flex-col overflow-hidden bg-[#0068d6] font-['DejaVu_Sans_Condensed','DejaVu_Sans',sans-serif] text-[11px] tracking-[-0.25px] text-black [font-stretch:condensed]">
      <Wallpaper />
      <div className="relative -ml-[1.5px] grid h-[692px] shrink-0 grid-flow-col auto-cols-[75px] grid-rows-[repeat(7,98px)] content-start pt-[7px] text-white">
        {desktop.map(({ label, icon: Icon, spacing = "tracking-[-0.05px]" }, i) => (
          <div key={i} className="flex flex-col items-center">
            <Icon />
            <div
              className={clsx(
                "mt-1 text-center leading-[13px] whitespace-nowrap [text-shadow:1px_1px_1px_#0006]",
                spacing
              )}
            >
              {label.map((line) => (
                <div key={line}>{line}</div>
              ))}
            </div>
          </div>
        ))}
      </div>
      <AnyRun />
      <Explorer />
      <Dialog />
      <div className="relative">
        <Taskbar />
      </div>
    </div>
  );
};

export default App;
